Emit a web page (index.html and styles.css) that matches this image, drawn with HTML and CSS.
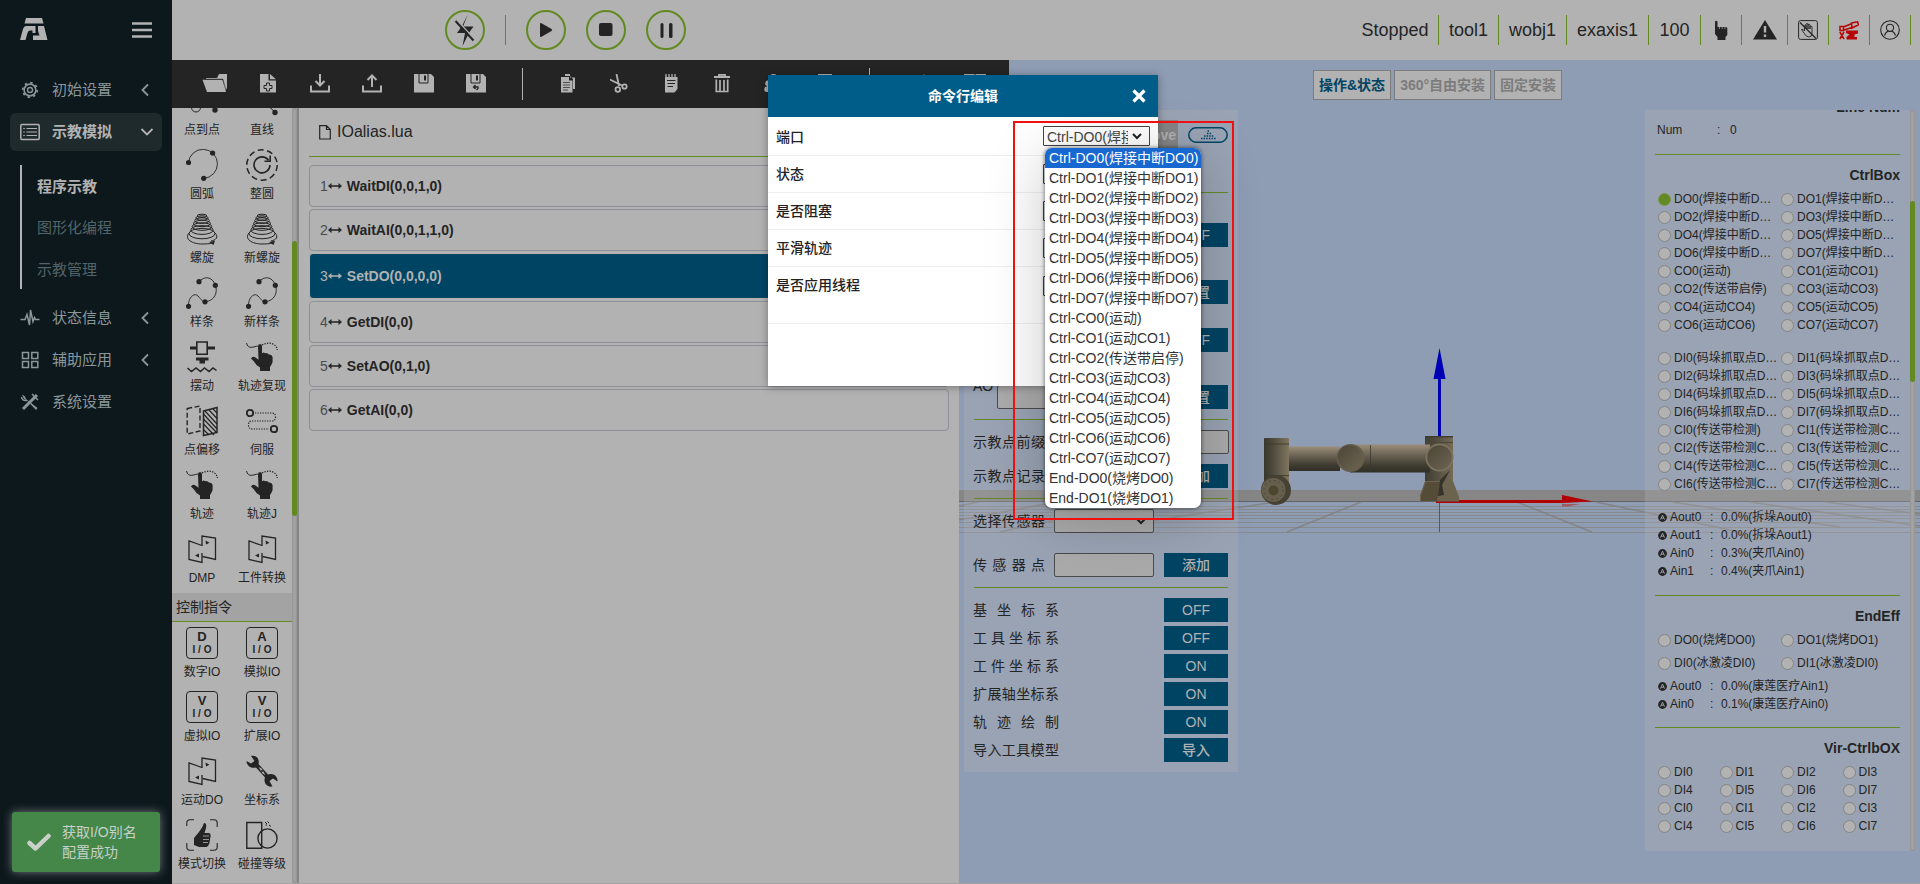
FILE: index.html
```html
<!DOCTYPE html>
<html lang="zh-CN">
<head>
<meta charset="utf-8">
<title>程序示教</title>
<link rel="stylesheet" href="styles.css">
</head>
<body>
<svg class="defs" width="0" height="0" aria-hidden="true">
  <defs>
    <symbol id="arc" viewBox="0 0 32 32"><path d="M2.5 13.5A14.5 14.5 0 1 1 17.7 29.3" fill="none" stroke="#242424" stroke-width=".9"/><g fill="#242424"><circle cx="2.5" cy="13.5" r="2.6"/><circle cx="26.6" cy="4" r="2.6"/><circle cx="17.7" cy="29.3" r="2.6"/></g></symbol>
    <symbol id="ptp" viewBox="0 0 32 32"><circle cx="10" cy="22.5" r="4.5" fill="none" stroke="#242424"/><circle cx="29" cy="25" r="2.7" fill="#242424"/></symbol>
    <symbol id="lin" viewBox="0 0 32 32"><path d="M3 4L29 27" stroke="#242424"/><circle cx="3" cy="4" r="2.7" fill="#242424"/><circle cx="29" cy="27.5" r="2.7" fill="#242424"/></symbol>
    <symbol id="circ" viewBox="0 0 32 32"><g fill="none" stroke="#242424"><circle cx="16" cy="16" r="15.2" stroke-width="1.5" stroke-dasharray="6 3.55"/><path d="M22.5 11.2A8 8 0 1 0 24 16" stroke-width="1.6"/><path d="M24.2 6.5V12.3H18.5" stroke-width="1.6"/></g></symbol>
    <symbol id="spiral" viewBox="0 0 32 32"><g fill="none" stroke="#242424" stroke-width="1"><ellipse cx="16" cy="2.8" rx="5" ry="1.6"/><ellipse cx="16" cy="5" rx="6.2" ry="2.2"/><ellipse cx="16" cy="7.6" rx="7.3" ry="2.8"/><ellipse cx="16" cy="10.5" rx="8.5" ry="3.2"/><ellipse cx="16" cy="13.6" rx="9.8" ry="3.8"/><ellipse cx="16" cy="17" rx="11.2" ry="4.4"/><ellipse cx="16" cy="20.6" rx="13" ry="5.2"/><path d="M3 20C-2 26 6 31 16 31C22 31 25 30.500 28 29.800M29 20C33 24 30 27 25 28"/></g><path d="M23 29L29 27.800L27.500 32z" fill="#242424"/></symbol>
    <symbol id="spline" viewBox="0 0 32 32"><path d="M2.500 29C2 21 8 15 12 19S16 25 19 24.700C29 24 32 15 29.300 8C26-1 18-1 13 4.700" fill="none" stroke="#242424" stroke-width=".9"/><g fill="#242424"><circle cx="2.500" cy="29.300" r="2.600"/><circle cx="13" cy="4.700" r="2.600"/><circle cx="29.300" cy="8.300" r="2.600"/><circle cx="19" cy="24.800" r="2.600"/></g></symbol>
    <symbol id="weave" viewBox="0 0 32 32"><path d="M10.800 1H21.200V13.200H10.800z" fill="none" stroke="#242424" stroke-width="1.600"/><path d="M4 5.500H10V8.500H4zM22 5.500H29V8.500H22zM10 16.500H22.500V19.500H10zM13.500 19.500H19V22.500H13.500z" fill="#242424"/><path d="M1.500 27L5.500 30.500L10 27L14.500 30.500L18.500 27L23 30.500L27 27L30.500 29.500" fill="none" stroke="#242424" stroke-width="1.500"/></symbol>
    <symbol id="finger" viewBox="0 0 32 32"><path d="M.5 2C2 9 8 5.500 12 5" fill="none" stroke="#242424" stroke-width="1"/><path d="M16 4C23 0 31 3 31.300 9" fill="none" stroke="#242424" stroke-width="1.300" stroke-dasharray="1.300 1.300"/><path d="M12 5.500Q12 3 14 3T16 5.500V12.500Q17.500 10.800 19.200 12.300Q21.500 11.500 22.800 13.600Q25.800 13 26.600 16V21Q25.500 24 24 26V30H14V26.500Q10 24.500 8 20.500L5 17.500Q6.500 14.800 9.500 16.500L12.500 18.800z" fill="#242424"/></symbol>
    <symbol id="offset" viewBox="0 0 32 32"><path d="M1.200 3.500L14 1V26L1.200 29z" fill="none" stroke="#242424" stroke-width="1.400" stroke-dasharray="5 2.500"/><path d="M17.500 6L31 2.500V27.500L17.500 30.500z" fill="none" stroke="#242424" stroke-width="1.500"/><path d="M17.500 9L31 24M17.500 14L31 28M17.500 19L28 30M17.500 24.500L23 30M19 6L31 19M23 5L31 13.500M27 4L31 8" stroke="#242424" stroke-width="1.200"/></symbol>
    <symbol id="servo" viewBox="0 0 32 32"><g fill="none" stroke="#242424"><circle cx="4" cy="8" r="3.200" stroke-width="1.800"/><circle cx="28" cy="24" r="3.200" stroke-width="1.800"/><path d="M9 8H26Q29.500 8 29.500 12T26 16H6Q2.500 16 2.500 20T6 24H23" stroke-width="1.200" stroke-dasharray="1.300 1.200"/></g></symbol>
    <symbol id="dmp" viewBox="0 0 32 32"><g fill="none" stroke="#242424" stroke-width="1.300"><path d="M16 13V3L29.500 5V26.500L16.500 23.500"/><path d="M16 12.500L3 8V26.500L16 29.500V20"/></g><path d="M19.500 7.500L23.500 9.800L20 11.500zM13 20.500L9 22.500L13 24.500z" fill="#242424"/></symbol>
    <symbol id="wrench" viewBox="0 0 32 32"><path d="M5 1C10-.5 14 4 12.500 9L22 19.500C27 17.500 32 21 31.500 26.500L27 23.500L23.500 26L26.500 31.500C21 32.500 17 28 19 22.500L10 12.500C5 14 .5 10.500.5 6L5 8.500L8.500 6z" fill="#242424"/><path d="M12.500 12L15.500 13.500L19.500 20L16.500 18.500z" fill="#b2b2b2"/><circle cx="16" cy="16" r="1" fill="#242424"/></symbol>
    <symbol id="thumb" viewBox="0 0 32 32"><path d="M.8 7V4Q.8.800 4 .8H8M24 .8H28Q31.200.8 31.200 4V8M31.200 24V28Q31.200 31.200 28 31.200H24M8 31.200H4Q.8 31.200.8 28V24" fill="none" stroke="#242424" stroke-width="1.100"/><path d="M18 4Q21 4 20 9L18.500 14H22.500Q24.800 14 24.500 16.300Q25 18 24 19.200Q24.600 21 23.600 22.200Q24 24 22.800 25.200Q22.500 28 19 28H13L8 26V19L13 13Q17 8 18 4z" fill="#242424"/><path d="M17 17H23M17 20.500H23M17 23.500H22" stroke="#b2b2b2" stroke-width=".8"/></symbol>
    <symbol id="collide" viewBox="0 0 32 32"><g fill="none" stroke="#242424" stroke-width="1.400"><path d="M.8 3.500H15.700V29.300H.8z"/><circle cx="21.500" cy="19.500" r="9.600"/></g><path d="M19 3L21 5M21.500 2.500L23 4M19.500 6H21M23 6L25 7.500" stroke="#242424"/></symbol>
    <symbol id="i-arrow" viewBox="0 0 14 10"><path d="M0 5L3.500 2V4.200H10.500V2L14 5L10.500 8V5.800H3.500V8z"/></symbol>
    <symbol id="i-chev" viewBox="0 0 10 14"><path d="M8 1.500L2.500 7L8 12.500" fill="none" stroke="currentColor" stroke-width="1.800"/></symbol>
    <symbol id="i-a" viewBox="0 0 10 10"><circle cx="5" cy="5" r="4.900" fill="#242424"/><path d="M2.800 7.300L5 2.400L7.200 7.300M3.700 5.800H6.300" fill="none" stroke="#a5abb5" stroke-width="1"/></symbol>
  </defs>
</svg>

<div class="app">
  <aside class="side">
    <div class="brand">
      <svg width="28" height="23" viewBox="0 0 28 23" fill="#b2b2b2"><path d="M6 0H22L23.500 5.500H4.500zM6 8H15.500V15H12.500V12.500H10Q8 12.500 7.500 15L5.500 22H0L3 11Q4 8 6 8zM18 8H24L27.500 22H13V17.500H19.500L18 13z"/></svg>
      <svg width="20" height="16" viewBox="0 0 20 16"><path d="M0 1.500H20M0 8H20M0 14.500H20" stroke="#b2b2b2" stroke-width="2.700"/></svg>
    </div>
    <nav class="nav">
      <div class="nav-item">
        <svg class="ni" viewBox="0 0 20 20" fill="none" stroke="currentColor"><circle cx="10" cy="10" r="5.900" stroke-width="1.600"/><circle cx="10" cy="10" r="2.500" stroke-width="1.400"/><circle cx="10" cy="10" r="7.300" stroke-width="1.700" stroke-dasharray="2.400 3.330"/></svg>
        <span>初始设置</span><svg class="chev"><use href="#i-chev"/></svg></div>
      <div class="nav-item on">
        <svg class="ni" viewBox="0 0 20 20" fill="none" stroke="currentColor"><rect x=".8" y="2.500" width="18.400" height="15" rx="1.200" stroke-width="1.500"/><path d="M6.500 6.500H17M6.500 10H17M6.500 13.500H17M3.300 6.500H4.800M3.300 10H4.800M3.300 13.500H4.800" stroke-width="1.200"/></svg>
        <span>示教模拟</span><svg class="chev down"><use href="#i-chev"/></svg></div>
      <div class="sub"><b>程序示教</b><span>图形化编程</span><span>示教管理</span></div>
      <div class="nav-item">
        <svg class="ni" viewBox="0 0 20 20" fill="none" stroke="currentColor" stroke-width="1.500"><path d="M.5 11.500H5L7 6.500L9.500 17L10.500 2L13 13.500L14.500 9.500L15.500 11.500H19.500"/></svg>
        <span>状态信息</span><svg class="chev"><use href="#i-chev"/></svg></div>
      <div class="nav-item">
        <svg class="ni" viewBox="0 0 20 20" fill="none" stroke="currentColor" stroke-width="1.500"><path d="M2.500 2.500H8.500V8.500H2.500zM11.800 2.500H17.800V8.500H11.800zM2.500 11.500H8.500V17.500H2.500zM11.800 11.500H17.800V17.500H11.800z"/></svg>
        <span>辅助应用</span><svg class="chev"><use href="#i-chev"/></svg></div>
      <div class="nav-item">
        <svg class="ni" viewBox="0 0 20 20"><path d="M3 17L17 3" stroke="currentColor" stroke-width="3"/><path d="M2 2.500L5 4.500L6 7L17.500 16L16 18L6.500 8L4 7z" fill="currentColor"/><path d="M12 2L15 5L18 8" stroke="currentColor" fill="none" stroke-width="1.500"/><path d="M1.500 5Q2 9 7 8.500" stroke="currentColor" fill="none" stroke-width="1.500"/></svg>
        <span>系统设置</span></div>
    </nav>
    <div class="toast">
      <svg width="24" height="19" viewBox="0 0 24 19"><path d="M2.500 10L8.500 15.500L21.500 3" fill="none" stroke="#c9d0ca" stroke-width="4.500" stroke-linecap="round" stroke-linejoin="round"/></svg>
      <p>获取I/O别名<br>配置成功</p>
    </div>
  </aside>

  <div class="main">
    <header class="top">
      <div class="run">
        <span class="rb"><svg width="24" height="32" viewBox="0 0 24 32"><path d="M15 0L10 12.500H20.500L16.500 18L9.500 32L12 19H4L9 12z" fill="#242424"/><path d="M3.800 6L21.800 25.500" stroke="#b2b2b2" stroke-width="1.500"/><path d="M2.500 7L20.500 26.500" stroke="#242424" stroke-width="2"/></svg></span>
        <i class="vsep"></i>
        <span class="rb"><svg width="14" height="16" viewBox="0 0 14 16"><path d="M1 2Q1 .5 2.500 1.200L12.500 7Q14 8 12.500 9L2.500 14.800Q1 15.500 1 14z" fill="#242424"/></svg></span>
        <span class="rb"><svg width="14" height="14"><rect width="13.500" height="13" rx="2" fill="#242424"/></svg></span>
        <span class="rb"><svg width="13" height="15"><rect x=".5" width="3" height="15" rx="1.500" fill="#242424"/><rect x="9" width="3.500" height="15" rx="1.500" fill="#242424"/></svg></span>
      </div>
      <div class="stat">
        <span class="w87">Stopped</span><span class="w60">tool1</span><span class="w68">wobj1</span><span class="w82">exaxis1</span><span class="w52">100</span>
        <span class="w41"><svg width="14" height="20" viewBox="0 0 14 20"><path d="M1 1.500Q2.200 0 3.500 1.500V7H12Q13.300 7 13.300 8.500V15L11.500 17V20H3.500V17L1 14z" fill="#242424"/><path d="M5.500 6V9M8.200 6V9M10.900 6V9" stroke="#b2b2b2" stroke-width=".7"/></svg></span>
        <span class="w46"><svg width="24" height="20" viewBox="0 0 24 20"><path d="M12 0L24 19.500H0z" fill="#242424"/><path d="M12 6V12.500M12 14.500V17" stroke="#b2b2b2" stroke-width="2.400"/></svg></span>
        <span class="w41"><svg width="20" height="20" viewBox="0 0 20 20" fill="none" stroke="#242424"><rect x=".6" y=".6" width="18.800" height="18.800" rx="2"/><path d="M2 2.500L18 18.500" stroke-width="1.200"/><path d="M6 13L3.500 9.500Q5 8.500 6.500 11V5.500Q7.500 4.500 8 5.500V9V4Q9.500 3 10 4V9V4.500Q11.500 3.500 12 5V9V6Q13.500 5.500 14 7V13Q14 17 11 17Q8 17 6 13z" stroke-width=".9"/></svg></span>
        <span class="w41"><svg width="20" height="19" viewBox="0 0 20 19" fill="none" stroke="#b80505"><path d="M1 5.500H4.500V9.500H1zM4.500 6L13 2.500M5 9L13 6.500M12.500 2L18.500.8L19.500 4L17 5L13 7zM.8 11L5 18M5 11L.8 18" stroke-width="1.500"/><path d="M7 9.500H19V12.500L15.500 13.500V16H18V18.500H7.500V16L10.500 13.500L7 12z" fill="#b80505" stroke="none"/></svg></span>
        <span class="w41"><svg width="20" height="20" viewBox="0 0 20 20" fill="none" stroke="#242424" stroke-width="1.100"><circle cx="10" cy="10" r="9.300"/><circle cx="10" cy="7.800" r="3.600"/><path d="M4.500 15.500Q5.500 12 8.500 11M15.500 15.500Q14.500 12 11.500 11"/></svg></span>
      </div>
    </header>

    <div class="work">
      <section class="left">
        <div class="bar">
          <span class="t t54"><svg width="27" height="20" viewBox="0 0 27 20" fill="#b2b2b2"><path d="M4 5H15L17 1H25V15L23 18.500L21 6H4z"/><path d="M.5 6.800H20.500L24 19H5z"/><path d="M3 6.200H20.800L24.300 18" fill="none" stroke="#242424" stroke-width=".6"/></svg></span>
          <span class="t"><svg width="16" height="19" viewBox="0 0 16 19"><path d="M0 0H8.500V6.500H16V18.500H0zM10 0L16 5.300H10z" fill="#b2b2b2"/><path d="M6.500 9H9.500V11.500H12V14.500H9.500V17H6.500V14.500H4V11.500H6.500z" fill="none" stroke="#242424" stroke-width="1"/></svg></span>
          <span class="t"><svg width="20" height="19" viewBox="0 0 20 19" fill="none" stroke="#b2b2b2" stroke-width="2"><path d="M1 11.500V17.500H19V11.500M10 0V11M5.500 7L10 11.500L14.500 7"/></svg></span>
          <span class="t"><svg width="20" height="19" viewBox="0 0 20 19" fill="none" stroke="#b2b2b2" stroke-width="2"><path d="M1 11.500V17.500H19V11.500M10 13V2M5.500 6L10 1.500L14.500 6"/></svg></span>
          <span class="t"><svg width="20" height="19" viewBox="0 0 20 19"><path d="M0 0H17L20 3V18.500H0z" fill="#b2b2b2"/><path d="M5 0V9H14V0" fill="none" stroke="#242424"/><path d="M10 1.500H12V6.500H10z" fill="#242424"/></svg></span>
          <span class="t"><svg width="20" height="19" viewBox="0 0 20 19"><path d="M0 0H17L20 3V18.500H0z" fill="#b2b2b2"/><path d="M5 0V9H14V0" fill="none" stroke="#242424"/><path d="M10 1.500H12V6.500H10z" fill="#242424"/><path d="M8 13H12V14.500L10.500 16M9.500 11L7.500 13L9.500 15" stroke="#242424" fill="none" stroke-width="1.300"/></svg></span>
          <i class="tsep"></i>
          <span class="t"><svg width="14" height="19" viewBox="0 0 14 19"><path d="M4 0H9V3.500H14V15H12V5L9 2H4z M0 3H8V6.500H11.500V18.500H0z" fill="#b2b2b2"/><path d="M2 8.500H9M2 11H9M2 13.500H9M2 16H7" stroke="#242424" stroke-width=".7"/></svg></span>
          <span class="t"><svg width="18" height="19" viewBox="0 0 18 19" fill="none" stroke="#b2b2b2" stroke-width="1.800"><path d="M0 5.500L12 11.500M6.500 0L9 12"/><circle cx="14.500" cy="12.500" r="2.200"/><circle cx="7.800" cy="15.500" r="2.300"/></svg></span>
          <span class="t"><svg width="14" height="19" viewBox="0 0 14 19"><path d="M1 3H13.500V15L10.500 18.500H1z" fill="#b2b2b2"/><path d="M2 0V4M5 0V4M8 0V4M11 0V4" stroke="#b2b2b2" stroke-width="1.300"/><path d="M3 6.500H11.500M3.500 9.500H11M3.500 12.500H9" stroke="#242424"/></svg></span>
          <span class="t"><svg width="16" height="19" viewBox="0 0 16 19" fill="none" stroke="#b2b2b2"><path d="M0 3H16M5 2.500V.8H11V2.500" stroke-width="1.800"/><path d="M2.300 5.500V17.500H13.700V5.500M6 6V17M10 6V17" stroke-width="1.700"/></svg></span>
          <span class="t"><svg width="19" height="19" viewBox="0 0 19 19" fill="#b2b2b2"><path d="M5 5Q5 0 9.500 0T14 5V6H16V18H3Q-1 18 1 13Q3 13 3 12Q0 11 2 7L5 6z"/></svg></span>
          <span class="t t66"><svg width="14" height="19"><rect width="14" height="18" fill="#b2b2b2"/></svg></span>
          <i class="tsep n"></i>
          <span class="t"><svg width="6" height="19" viewBox="0 0 6 19"><path d="M3 0L6 5H0z" fill="#b2b2b2"/></svg></span>
          <span class="t t66"><svg width="22" height="19" viewBox="0 0 22 19" fill="none" stroke="#b2b2b2" stroke-width="3"><path d="M1.500 1H9V7H1.500zM13 1H20.500V7H13z"/></svg></span>
        </div>
        <div class="cols">
          <div class="palette">
            <div class="pal-scroll">
              <div class="grid up">
                <div class="cmd"><svg><use href="#ptp"/></svg>点到点</div><div class="cmd"><svg><use href="#lin"/></svg>直线</div>
                <div class="cmd"><svg><use href="#arc"/></svg>圆弧</div><div class="cmd"><svg><use href="#circ"/></svg>整圆</div>
                <div class="cmd"><svg><use href="#spiral"/></svg>螺旋</div><div class="cmd"><svg><use href="#spiral"/></svg>新螺旋</div>
                <div class="cmd"><svg><use href="#spline"/></svg>样条</div><div class="cmd"><svg><use href="#spline"/></svg>新样条</div>
                <div class="cmd"><svg><use href="#weave"/></svg>摆动</div><div class="cmd"><svg><use href="#finger"/></svg>轨迹复现</div>
                <div class="cmd"><svg><use href="#offset"/></svg>点偏移</div><div class="cmd"><svg><use href="#servo"/></svg>伺服</div>
                <div class="cmd"><svg><use href="#finger"/></svg>轨迹</div><div class="cmd"><svg><use href="#finger"/></svg>轨迹J</div>
                <div class="cmd"><svg><use href="#dmp"/></svg>DMP</div><div class="cmd"><svg><use href="#dmp"/></svg>工件转换</div>
              </div>
              <h3>控制指令</h3>
              <div class="grid">
                <div class="cmd"><span class="io"><b>D</b><em>I / O</em></span>数字IO</div><div class="cmd"><span class="io"><b>A</b><em>I / O</em></span>模拟IO</div>
                <div class="cmd"><span class="io"><b>V</b><em>I / O</em></span>虚拟IO</div><div class="cmd"><span class="io"><b>V</b><em>I / O</em></span>扩展IO</div>
                <div class="cmd"><svg><use href="#dmp"/></svg>运动DO</div><div class="cmd"><svg><use href="#wrench"/></svg>坐标系</div>
                <div class="cmd"><svg><use href="#thumb"/></svg>模式切换</div><div class="cmd"><svg><use href="#collide"/></svg>碰撞等级</div>
              </div>
            </div>
            <div class="sb"><i></i></div>
          </div>
          <div class="code">
            <div class="file"><svg width="12" height="15" viewBox="0 0 12 15" fill="none" stroke="#242424" stroke-width="1.200"><path d="M.7.7H7.500L11.300 4.500V14H.7zM7.500.7V4.500H11.300"/></svg>IOalias.lua</div>
            <div class="line"><span>1</span><svg><use href="#i-arrow"/></svg><b>WaitDI(0,0,1,0)</b></div>
            <div class="line"><span>2</span><svg><use href="#i-arrow"/></svg><b>WaitAI(0,0,1,1,0)</b></div>
            <div class="line sel"><span>3</span><svg><use href="#i-arrow"/></svg><b>SetDO(0,0,0,0)</b></div>
            <div class="line"><span>4</span><svg><use href="#i-arrow"/></svg><b>GetDI(0,0)</b></div>
            <div class="line"><span>5</span><svg><use href="#i-arrow"/></svg><b>SetAO(0,1,0)</b></div>
            <div class="line"><span>6</span><svg><use href="#i-arrow"/></svg><b>GetAI(0,0)</b></div>
          </div>
        </div>
      </section>

      <section class="view">
        <svg class="scene" width="961" height="824" viewBox="959 60 961 824">
          <defs>
            <linearGradient id="gh" x1="0" x2="0" y1="0" y2="1"><stop offset="0" stop-color="#9b8e79"/><stop offset=".35" stop-color="#6e6657"/><stop offset=".75" stop-color="#3f3c31"/><stop offset="1" stop-color="#302e25"/></linearGradient>
            <linearGradient id="gv" x1="0" x2="1" y1="0" y2="0"><stop offset="0" stop-color="#39372c"/><stop offset=".35" stop-color="#4d493c"/><stop offset="1" stop-color="#80765f"/></linearGradient>
            <linearGradient id="gc" x1="0" x2="1" y1="0" y2="1"><stop offset="0" stop-color="#4a4538"/><stop offset="1" stop-color="#6e6552"/></linearGradient>
          </defs>
          <rect x="959" y="490" width="961" height="12" fill="#868686"/>
          <path d="M959 501.500H1920" stroke="#606368"/>
          <path d="M959 506.500H1920M959 509.500H1920M959 512.500H1920M959 515.500H1920M959 518.500H1920M959 522.500H1920M959 527.500H1920M959 532.500H1920" stroke="#858585" opacity=".8"/>
          <path d="M978 502L959 506M1057 502L959 520M1137 502L1000 532M1275 502L1110 527M1361 502L1287 532M1517 502L1592 532M1596 502L1740 532M1672 502L1840 527M1750 502L1920 526M1826 502L1920 514" stroke="#83807c" stroke-width="1.400" fill="none" opacity=".85"/>
          <path d="M1439.500 502V532" stroke="#55585c"/>
          <path d="M1438 436V379H1433.500L1439.500 348L1445.500 379H1441V436z" fill="#0000b4"/>
          <path d="M1425 437H1453V490L1459 501H1420V496L1425 482z" fill="url(#gv)"/>
          <path d="M1425 481H1453L1459 497V501H1420V496z" fill="#6c634f"/>
          <path d="M1426 482H1440L1437 501H1421V496z" fill="#554c38"/>
          <path d="M1450 470L1442 485L1444 495L1438 496L1440 480z" fill="#35322a"/>
          <rect x="1288" y="446.500" width="52" height="24.500" fill="url(#gh)"/>
          <rect x="1350" y="444.500" width="80" height="28" fill="url(#gh)"/>
          <path d="M1425 442.500H1453" stroke="#4a4639"/>
          <rect x="1425" y="436" width="28" height="1.500" fill="#403c31"/>
          <rect x="1264" y="438" width="25" height="48" rx="1" fill="url(#gv)"/>
          <path d="M1264 444H1289M1264 475.500H1289M1370.500 445V472" stroke="#3a362c" stroke-width=".8"/>
          <circle cx="1350.500" cy="458" r="14" fill="#665d4b"/><circle cx="1350" cy="457.500" r="12.300" fill="url(#gc)"/>
          <circle cx="1439.500" cy="457.500" r="14" fill="#7d725d"/><circle cx="1439.500" cy="457.500" r="12.300" fill="url(#gc)"/>
          <circle cx="1276" cy="490" r="15" fill="#464133"/><circle cx="1273.500" cy="490" r="12" fill="#675f4d"/><circle cx="1273.500" cy="490.500" r="5" fill="#4a462f"/>
          <circle cx="1273.500" cy="490" r="9.500" fill="none" stroke="#4b4638" stroke-dasharray="2 3"/>
          <path d="M1459 500H1562V495L1593 501.500L1562 503H1436V501.500H1459z" fill="#b00000"/>
          <path d="M1562 504H1580L1568 506.500H1562z" fill="#a05a62"/>
        </svg>
        <div class="tabs"><span class="act">操作&amp;状态</span><span>360°自由安装</span><span>固定安装</span></div>

        <div class="ops">
          <div class="mv"><span>Move</span><svg width="40" height="18" viewBox="0 0 40 18"><rect x=".8" y="1.800" width="38.400" height="14.400" rx="7.200" fill="none" stroke="#004464" stroke-width="1.500"/><path d="M13 12.500H28M16 10H26M19 7.500H24M19.500 5H22" stroke="#004464" stroke-width="1.500" stroke-dasharray="1.500 1.100"/></svg></div>
          <hr class="h1">
          <div class="r r1"><button>OFF</button></div>
          <div class="r r2"><button>设置</button></div>
          <div class="r r3"><button>OFF</button></div>
          <div class="r r4"><label class="ao">AO</label><i class="box aoin"></i><button>设置</button></div>
          <hr>
          <div class="r r5"><label class="l5">示教点前缀</label><i class="box wide"></i></div>
          <div class="r r6"><label class="l5">示教点记录</label><button>添加</button></div>
          <hr>
          <div class="r r7"><label class="l5">选择传感器</label><i class="box"><svg width="10" height="7" viewBox="0 0 10 7"><path d="M1 1L5 5L9 1" fill="none" stroke="#242424" stroke-width="2"/></svg></i></div>
          <div class="r r8"><label class="l5">传感器点</label><i class="box"></i><button>添加</button></div>
          <hr>
          <div class="list">
            <div class="r"><label class="l6">基坐标系</label><button>OFF</button></div>
            <div class="r"><label class="l6">工具坐标系</label><button>OFF</button></div>
            <div class="r"><label class="l6">工件坐标系</label><button>ON</button></div>
            <div class="r"><label class="l6">扩展轴坐标系</label><button>ON</button></div>
            <div class="r"><label class="l6">轨迹绘制</label><button>ON</button></div>
            <div class="r"><label class="l6">导入工具模型</label><button>导入</button></div>
          </div>
        </div>

        <div class="status">
          <div class="st-body">
            <h4 class="ln">Line Num</h4>
            <div class="num"><span>Num</span><span>:</span><span>0</span></div>
            <hr>
            <h4>CtrlBox</h4>
            <div class="two">
              <span class="g">DO0(焊接中断D…</span><span>DO1(焊接中断D…</span><span>DO2(焊接中断D…</span><span>DO3(焊接中断D…</span>
              <span>DO4(焊接中断D…</span><span>DO5(焊接中断D…</span><span>DO6(焊接中断D…</span><span>DO7(焊接中断D…</span>
              <span>CO0(运动)</span><span>CO1(运动CO1)</span><span>CO2(传送带启停)</span><span>CO3(运动CO3)</span>
              <span>CO4(运动CO4)</span><span>CO5(运动CO5)</span><span>CO6(运动CO6)</span><span>CO7(运动CO7)</span>
            </div>
            <div class="two di">
              <span>DI0(码垛抓取点D…</span><span>DI1(码垛抓取点D…</span><span>DI2(码垛抓取点D…</span><span>DI3(码垛抓取点D…</span>
              <span>DI4(码垛抓取点D…</span><span>DI5(码垛抓取点D…</span><span>DI6(码垛抓取点D…</span><span>DI7(码垛抓取点D…</span>
              <span>CI0(传送带检测)</span><span>CI1(传送带检测C…</span><span>CI2(传送带检测C…</span><span>CI3(传送带检测C…</span>
              <span>CI4(传送带检测C…</span><span>CI5(传送带检测C…</span><span>CI6(传送带检测C…</span><span>CI7(传送带检测C…</span>
            </div>
            <div class="an a1">
              <p><svg><use href="#i-a"/></svg><span>Aout0</span><span>:</span><span>0.0%(拆垛Aout0)</span></p>
              <p><svg><use href="#i-a"/></svg><span>Aout1</span><span>:</span><span>0.0%(拆垛Aout1)</span></p>
              <p><svg><use href="#i-a"/></svg><span>Ain0</span><span>:</span><span>0.3%(夹爪Ain0)</span></p>
              <p><svg><use href="#i-a"/></svg><span>Ain1</span><span>:</span><span>0.4%(夹爪Ain1)</span></p>
            </div>
            <hr>
            <h4>EndEff</h4>
            <div class="two"><span>DO0(烧烤DO0)</span><span>DO1(烧烤DO1)</span></div>
            <div class="two e2"><span>DI0(冰激凌DI0)</span><span>DI1(冰激凌DI0)</span></div>
            <div class="an a2">
              <p><svg><use href="#i-a"/></svg><span>Aout0</span><span>:</span><span>0.0%(康莲医疗Ain1)</span></p>
              <p><svg><use href="#i-a"/></svg><span>Ain0</span><span>:</span><span>0.1%(康莲医疗Ain0)</span></p>
            </div>
            <hr>
            <h4>Vir-CtrlbOX</h4>
            <div class="two four">
              <span>DI0</span><span>DI1</span><span>DI2</span><span>DI3</span><span>DI4</span><span>DI5</span><span>DI6</span><span>DI7</span>
              <span>CI0</span><span>CI1</span><span>CI2</span><span>CI3</span><span>CI4</span><span>CI5</span><span>CI6</span><span>CI7</span>
            </div>
          </div>
          <div class="sb st-sb"><i></i></div>
        </div>
      </section>
    </div>
  </div>
</div>

<div class="modal">
  <div class="m-head"><b>命令行编辑</b><svg width="14" height="14" viewBox="0 0 14 14"><path d="M1.500 1.500L12.500 12.500M12.500 1.500L1.500 12.500" stroke="#fff" stroke-width="3.200"/></svg></div>
  <div class="m-row first"><b>端口</b><div class="sel-box"><span>Ctrl-DO0(焊接中断DO0)</span><svg width="10" height="7" viewBox="0 0 10 7"><path d="M1 1L5 5L9 1" fill="none" stroke="#222" stroke-width="2"/></svg></div></div>
  <div class="m-row"><b>状态</b><div class="sel-box"></div></div>
  <div class="m-row"><b>是否阻塞</b><div class="sel-box"></div></div>
  <div class="m-row"><b>平滑轨迹</b><div class="sel-box"></div></div>
  <div class="m-row last"><b>是否应用线程</b><div class="sel-box"></div></div>
</div>
<ul class="drop">
  <li class="hl">Ctrl-DO0(焊接中断DO0)</li><li>Ctrl-DO1(焊接中断DO1)</li><li>Ctrl-DO2(焊接中断DO2)</li><li>Ctrl-DO3(焊接中断DO3)</li><li>Ctrl-DO4(焊接中断DO4)</li><li>Ctrl-DO5(焊接中断DO5)</li><li>Ctrl-DO6(焊接中断DO6)</li><li>Ctrl-DO7(焊接中断DO7)</li><li>Ctrl-CO0(运动)</li><li>Ctrl-CO1(运动CO1)</li><li>Ctrl-CO2(传送带启停)</li><li>Ctrl-CO3(运动CO3)</li><li>Ctrl-CO4(运动CO4)</li><li>Ctrl-CO5(运动CO5)</li><li>Ctrl-CO6(运动CO6)</li><li>Ctrl-CO7(运动CO7)</li><li>End-DO0(烧烤DO0)</li><li>End-DO1(烧烤DO1)</li>
</ul>
<div class="mark"></div>
</body>
</html>
```
FILE: styles.css
```css
* { box-sizing: border-box; }
body { margin: 0; width: 1920px; height: 884px; overflow: hidden; position: relative; font-family: "Liberation Sans", "Noto Sans CJK SC", sans-serif; font-size: 14px; color: #242424; background: #b2b2b2; }
p, h3, h4, ul { margin: 0; padding: 0; }
svg { display: block; flex: none; }
.defs { position: absolute; }
.app { display: grid; grid-template-columns: 172px 1fr; height: 884px; }

/* sidebar */
.side { background: #0d181d; display: flex; flex-direction: column; color: #8b9699; }
.brand { height: 71px; padding: 18px 20px 0; display: flex; justify-content: space-between; align-items: flex-start; }
.brand svg:last-child { margin-top: 4px; }
.nav { flex: 1; padding: 0 10px; font-size: 15px; }
.nav-item { height: 38px; margin-bottom: 4px; padding: 0 8px 1px 10px; display: flex; align-items: center; border-radius: 6px; color: #8b979a; }
.nav-item span { flex: 1; margin: -2px 0 0 12px; }
.nav-item.on { background: #1f2a2c; color: #b2b2b2; font-weight: bold; }
.ni { width: 20px; height: 20px; }
.chev { width: 10px; height: 14px; margin-right: 4px; }
.chev.down { transform: rotate(-90deg); margin-right: 2px; }
.sub { margin: 14px 0 10px 10px; height: 124px; border-left: 2px solid #b2b2b2; padding-left: 15px; display: grid; grid-template-rows: repeat(3, 1fr); align-items: center; color: #526468; }
.sub b { color: #b2b2b2; }
.toast { margin: 0 12px 12px; width: 148px; height: 60px; border-radius: 3px; background: #448748; box-shadow: 0 0 10px #6f7678; color: #c9d0ca; display: flex; align-items: center; padding-left: 15px; line-height: 20px; }
.toast p { margin-left: 11px; }

/* header */
.main { min-width: 0; display: grid; grid-template-rows: 60px 824px; }
.top { display: flex; justify-content: space-between; padding: 0 9px 0 273px; }
.run { display: flex; align-items: center; gap: 20px; height: 60px; }
.rb { width: 40px; height: 40px; border: 2px solid #638a22; border-radius: 50%; display: flex; align-items: center; justify-content: center; }
.vsep { width: 1px; height: 30px; background: #638a22; }
.stat { display: flex; align-items: center; font-size: 18px; }
.stat span { height: 30px; display: flex; align-items: center; justify-content: center; border-right: 1px solid #638a22; }
.w87 { width: 87px; } .w60 { width: 60px; } .w68 { width: 68px; } .w82 { width: 82px; } .w52 { width: 52px; } .w41 { width: 41px; } .w46 { width: 46px; }

.work { display: grid; grid-template-columns: 787px 961px; }
.left { display: flex; flex-direction: column; position: relative; z-index: 2; min-width: 0; }
.bar { width: 837px; height: 48px; background: #242424; display: flex; align-items: center; padding: 0 0 2px 16px; }
.t { width: 52px; display: flex; justify-content: center; flex: none; }
.t54 { width: 54px; } .t66 { width: 66px; }
.bar .tsep { width: 1px; height: 32px; background: #b2b2b2; margin: 2px 19px 0 20px; flex: none; }
.tsep ~ .t { width: 51.500px; }
.bar .tsep.n { margin: 2px 28px 0 18px; }
.cols { flex: 1; display: grid; grid-template-columns: 127px 1fr; height: 776px; border-bottom: 1px solid #a3a3a3; }
.palette { display: flex; border-right: 2px solid #858585; height: 775px; overflow: hidden; }
.pal-scroll { width: 120px; overflow: hidden; }
.up { margin-top: -27px; }
.grid { display: grid; grid-template-columns: 60px 60px; grid-auto-rows: 64px; }
.cmd { display: flex; flex-direction: column; align-items: center; padding-top: 4px; font-size: 12px; line-height: 18px; white-space: nowrap; }
.cmd svg, .io { width: 32px; height: 32px; margin-bottom: 4px; }
.pal-scroll h3 { height: 29px; margin-bottom: 1px; background: #a3a3a3; border-bottom: 1px solid #638a22; font-weight: normal; font-size: 14px; line-height: 28px; padding-left: 4px; }
.io { border: 1px solid #242424; border-radius: 4px; display: flex; flex-direction: column; align-items: center; justify-content: center; line-height: 13px; }
.io b { font-size: 13px; } .io em { font: bold 10px/13px "Liberation Sans", sans-serif; }
.sb { width: 5px; background: #a3a3a3; border-radius: 3px; box-shadow: inset 0 0 2px #777; }
.sb i { display: block; height: 275px; margin-top: 133px; background: #638a22; border-radius: 3px; }
.code { padding: 0 10px; }
.file { height: 49px; border-bottom: 1px solid #638a22; margin-bottom: 8px; display: flex; align-items: center; gap: 6px; padding-left: 10px; font-size: 16px; }
.line { height: 42px; margin-bottom: 2px; border: 1px solid #8f9097; border-radius: 4px; display: flex; align-items: center; padding-left: 10px; font-size: 14px; }
.line span { color: #4a4a4a; }
.line svg { width: 14px; height: 10px; margin: 0 5px 0 0; fill: #242424; }
.sel { height: 46px; background: #004464; border-color: #b2b2b2; color: #b2b2b2; }
.sel span { color: #b2b2b2; } .line.sel svg { fill: #b2b2b2; }

/* 3D view */
.view { position: relative; background: #8e9cb4; border-bottom: 1px solid #a3a3a3; }
.scene { position: absolute; left: 0; top: 0; }
.tabs { position: absolute; left: 354px; top: 10px; display: flex; gap: 3px; font-weight: bold; font-size: 14px; }
.tabs span { height: 30px; line-height: 28px; border: 1px solid #7c7c7c; background: #b2b2b2; color: #7c7c7c; padding: 0 5px; white-space: nowrap; }
.tabs .act { color: #004464; }
.ops { position: absolute; left: 5px; top: 50px; width: 274px; height: 662px; background: rgba(178,178,178,.3); padding: 10px 10px 0; }
.mv { display: flex; justify-content: flex-end; gap: 10px; height: 32px; align-items: flex-start; }
.mv span { background: #858585; color: #b2b2b2; font-weight: bold; width: 54px; height: 30px; line-height: 30px; text-align: right; padding-right: 2px; }
.mv svg { margin-top: 6px; }
hr { border: 0; height: 1px; background: #638a22; margin: 0; }
.ops .h1 { margin-top: 40px; }
.r { display: flex; align-items: center; height: 24px; }
.r button { margin: 0 0 0 auto; border: 0; padding: 0; width: 64px; height: 24px; background: #004464; color: #b2b2b2; font: 500 14px/24px "Liberation Sans", "Noto Sans CJK SC", sans-serif; }
.r1 { margin-top: 30px; } .r2 { margin-top: 33px; } .r3 { margin-top: 24px; } .r4 { margin: 33px 0 10px; }
.r5 { margin-top: 10px; } .r6 { margin: 10px 0 10px; } .r7 { margin-top: 10px; } .r8 { margin: 20px 0 10px; }
.box { width: 100px; height: 24px; margin-left: 9px; background: #aaa; border: 1px solid #4b4b4b; border-radius: 2px; display: flex; align-items: center; justify-content: flex-end; padding-right: 7px; }
.r .ao { width: 24px; margin-top: -22px; } .ao + .aoin { margin-left: 0; }
.wide { width: 175px; margin-right: -1px; flex: 1; }
.r label { margin-top: -2px; margin-left: -1px; }
.l5 { width: 72px; text-align-last: justify; } .l6 { width: 86px; text-align-last: justify; }
.list { padding-top: 10px; display: grid; gap: 4px; }

.status { position: absolute; left: 686px; top: 50px; width: 270px; height: 741px; background: rgba(178,178,178,.3); display: flex; overflow: hidden; font-size: 12px; }
.st-body { width: 265px; padding: 0 10px; }
.st-sb { height: 741px; } .st-sb i { height: 181px; margin-top: 91px; }
.status h4 { text-align: right; font-size: 14px; line-height: 20px; margin-top: 10px; }
.status .ln { margin-top: -13px; }
.num { display: flex; height: 20px; margin: 4px 0 13px; line-height: 18px; padding-left: 2px; }
.num span:nth-child(1) { width: 60px; } .num span:nth-child(2) { width: 13px; }
.two { display: grid; grid-template-columns: 123px 123px; grid-auto-rows: 18px; margin-top: 5px; padding-left: 3px; white-space: nowrap; }
.two span { display: flex; align-items: center; line-height: 18px; }
.two span::before { content: ""; width: 11px; height: 11px; border-radius: 50%; background: #b2b2b2; border: 1px solid #858585; margin-right: 3px; flex: none; }
.two .g::before { background: #638a22; border-color: #7d9455; }
.di { margin-top: 15px; } .e2 { margin-top: 5px; }
.four { grid-template-columns: repeat(4, 61.500px); }
.an p { display: flex; align-items: center; height: 18px; line-height: 18px; padding-left: 3px; }
.an svg { width: 9px; height: 9px; margin-right: 3px; }
.an span { height: 18px; }
.an span:nth-of-type(1) { width: 40px; } .an span:nth-of-type(2) { width: 11px; }
.a1 { margin: 15px 0; } .a2 { margin: 5px 0 14px; }

/* dialog */
.modal { position: absolute; z-index: 5; left: 768px; top: 75px; width: 390px; height: 311px; background: #fff; box-shadow: 0 1px 8px rgba(0,0,0,.35); }
.m-head { height: 42px; background: #005d8a; color: #fff; display: grid; grid-template-columns: 1fr auto; align-items: center; padding: 0 12px 0 26px; text-align: center; }
.m-head b { margin-top: -2px; }
.m-row { height: 37px; border-bottom: 1px solid #eee; display: flex; align-items: center; justify-content: space-between; padding: 0 8px; color: #222; }
.m-row b { font-weight: 500; margin-top: -2px; }
.m-row.first { height: 39px; }
.m-row.first b { margin-top: 0; }
.m-row.last { height: 57px; align-items: flex-start; padding-top: 9px; }
.sel-box { width: 107px; height: 20px; border: 1px solid #444; border-radius: 1px; display: flex; align-items: center; justify-content: space-between; padding: 0 7px 0 3px; color: #444; }
.sel-box span { width: 81px; overflow: hidden; white-space: nowrap; }
.drop { position: absolute; z-index: 6; left: 1045px; top: 148px; width: 156px; list-style: none; background: #fff; border-radius: 7px; overflow: hidden; box-shadow: 0 0 4px rgba(0,0,0,.6), 0 10px 60px rgba(0,0,0,.22); }
.drop li { height: 20px; line-height: 20px; padding-left: 4px; white-space: nowrap; color: #333; }
.drop .hl { background: #1768d0; color: #fff; }
.mark { position: absolute; z-index: 7; left: 1013px; top: 121px; width: 221px; height: 399px; border: 2px solid #f01010; }
```
